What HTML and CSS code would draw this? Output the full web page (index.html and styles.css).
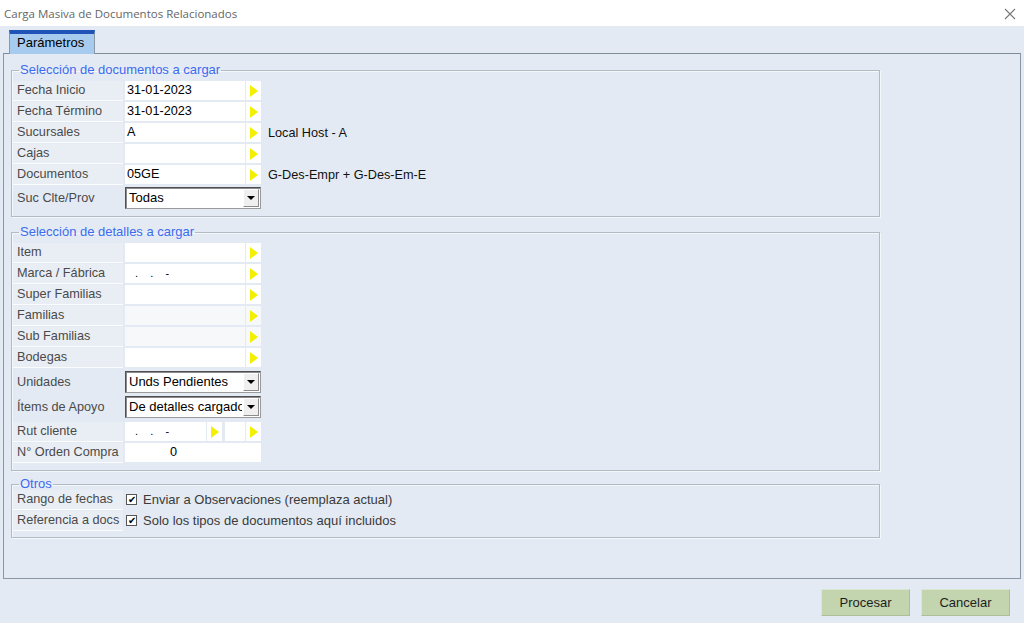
FILE: index.html
```html
<!DOCTYPE html>
<html lang="es">
<head>
    <meta charset="UTF-8">
    <title>Carga Masiva de Documentos Relacionados</title>
    <link rel="stylesheet" href="styles.css">
</head>
<body>
    <div class="window">
        <div class="titlebar">
            <span class="titlebar__text">Carga Masiva de Documentos Relacionados</span>
            <svg class="titlebar__close" width="12" height="12" viewBox="0 0 12 12">
                <path d="M1 1L11 11M11 1L1 11" stroke="#777" stroke-width="1.1" fill="none"/>
            </svg>
        </div>

        <div class="tabs">
            <div class="tab">Parámetros</div>
        </div>

        <div class="panel">
            <fieldset class="group">
                <legend class="group__title">Selección de documentos a cargar</legend>
                <div class="row">
                    <div class="row__label">Fecha Inicio</div>
                    <div class="field"><span class="field__text">31-01-2023</span><span class="field__btn"><svg width="8" height="12" viewBox="0 0 8 12"><polygon points="0,0 8,6 0,12" fill="#f2ef00"/></svg></span></div>
                </div>
                <div class="row">
                    <div class="row__label">Fecha Término</div>
                    <div class="field"><span class="field__text">31-01-2023</span><span class="field__btn"><svg width="8" height="12" viewBox="0 0 8 12"><polygon points="0,0 8,6 0,12" fill="#f2ef00"/></svg></span></div>
                </div>
                <div class="row">
                    <div class="row__label">Sucursales</div>
                    <div class="field"><span class="field__text">A</span><span class="field__btn"><svg width="8" height="12" viewBox="0 0 8 12"><polygon points="0,0 8,6 0,12" fill="#f2ef00"/></svg></span></div>
                    <div class="row__desc">Local Host - A</div>
                </div>
                <div class="row">
                    <div class="row__label">Cajas</div>
                    <div class="field"><span class="field__text"></span><span class="field__btn"><svg width="8" height="12" viewBox="0 0 8 12"><polygon points="0,0 8,6 0,12" fill="#f2ef00"/></svg></span></div>
                </div>
                <div class="row">
                    <div class="row__label">Documentos</div>
                    <div class="field"><span class="field__text">05GE</span><span class="field__btn"><svg width="8" height="12" viewBox="0 0 8 12"><polygon points="0,0 8,6 0,12" fill="#f2ef00"/></svg></span></div>
                    <div class="row__desc">G-Des-Empr + G-Des-Em-E</div>
                </div>
                <div class="row row--select row--suc">
                    <div class="row__label">Suc Clte/Prov</div>
                    <div class="combo"><span class="combo__text">Todas</span><span class="combo__btn"></span></div>
                </div>
            </fieldset>

            <fieldset class="group group--details">
                <legend class="group__title">Selección de detalles a cargar</legend>
                <div class="row">
                    <div class="row__label">Item</div>
                    <div class="field"><span class="field__text"></span><span class="field__btn"><svg width="8" height="12" viewBox="0 0 8 12"><polygon points="0,0 8,6 0,12" fill="#f2ef00"/></svg></span></div>
                </div>
                <div class="row">
                    <div class="row__label">Marca / Fábrica</div>
                    <div class="field"><span class="field__text field__text--mask">.&nbsp;&nbsp;&nbsp;&nbsp;.&nbsp;&nbsp;&nbsp;&nbsp;-</span><span class="field__btn"><svg width="8" height="12" viewBox="0 0 8 12"><polygon points="0,0 8,6 0,12" fill="#f2ef00"/></svg></span></div>
                </div>
                <div class="row">
                    <div class="row__label">Super Familias</div>
                    <div class="field"><span class="field__text"></span><span class="field__btn"><svg width="8" height="12" viewBox="0 0 8 12"><polygon points="0,0 8,6 0,12" fill="#f2ef00"/></svg></span></div>
                </div>
                <div class="row">
                    <div class="row__label">Familias</div>
                    <div class="field field--off"><span class="field__text"></span><span class="field__btn"><svg width="8" height="12" viewBox="0 0 8 12"><polygon points="0,0 8,6 0,12" fill="#f2ef00"/></svg></span></div>
                </div>
                <div class="row">
                    <div class="row__label">Sub Familias</div>
                    <div class="field field--off"><span class="field__text"></span><span class="field__btn"><svg width="8" height="12" viewBox="0 0 8 12"><polygon points="0,0 8,6 0,12" fill="#f2ef00"/></svg></span></div>
                </div>
                <div class="row">
                    <div class="row__label">Bodegas</div>
                    <div class="field"><span class="field__text"></span><span class="field__btn"><svg width="8" height="12" viewBox="0 0 8 12"><polygon points="0,0 8,6 0,12" fill="#f2ef00"/></svg></span></div>
                </div>
                <div class="row row--select row--first-select">
                    <div class="row__label">Unidades</div>
                    <div class="combo"><span class="combo__text">Unds Pendientes</span><span class="combo__btn"></span></div>
                </div>
                <div class="row row--select">
                    <div class="row__label">Ítems de Apoyo</div>
                    <div class="combo"><span class="combo__text">De detalles cargados</span><span class="combo__btn"></span></div>
                </div>
                <div class="row row--rut">
                    <div class="row__label">Rut cliente</div>
                    <div class="field field--rut"><span class="field__text field__text--mask">.&nbsp;&nbsp;&nbsp;&nbsp;.&nbsp;&nbsp;&nbsp;&nbsp;-</span><span class="field__btn"><svg width="8" height="12" viewBox="0 0 8 12"><polygon points="0,0 8,6 0,12" fill="#f2ef00"/></svg></span></div>
                    <div class="field field--dv"><span class="field__text"></span><span class="field__btn"><svg width="8" height="12" viewBox="0 0 8 12"><polygon points="0,0 8,6 0,12" fill="#f2ef00"/></svg></span></div>
                </div>
                <div class="row">
                    <div class="row__label">N° Orden Compra</div>
                    <div class="field"><span class="field__text field__text--num">0</span></div>
                </div>
            </fieldset>

            <fieldset class="group group--otros">
                <legend class="group__title">Otros</legend>
                <div class="row">
                    <div class="row__label">Rango de fechas</div>
                    <label class="check"><span class="check__box">✔</span>Enviar a Observaciones (reemplaza actual)</label>
                </div>
                <div class="row">
                    <div class="row__label">Referencia a docs</div>
                    <label class="check"><span class="check__box">✔</span>Solo los tipos de documentos aquí incluidos</label>
                </div>
            </fieldset>
        </div>

        <div class="actions">
            <button class="btn">Procesar</button>
            <button class="btn">Cancelar</button>
        </div>
    </div>
</body>
</html>
```

FILE: styles.css
```css
body {
    margin: 0;
    padding: 0;
    background-color: #e3eaf3;
    font-family: "Liberation Sans", Arial, sans-serif;
    font-size: 12.7px;
    color: #000000;
}

.window {
    width: 1024px;
    height: 623px;
    overflow: hidden;
    background-color: #e3eaf3;
}

.titlebar {
    height: 26px;
    background-color: #ffffff;
    display: flex;
    align-items: center;
    justify-content: space-between;
    padding: 0 8px 0 4px;
}

.titlebar__text {
    color: #666666;
    font-family: "Open Sans", "Liberation Sans", sans-serif;
    font-size: 11.5px;
}

.titlebar__close {
    margin-top: 1px;
}

.tabs {
    display: flex;
    padding-left: 9px;
    margin-top: 4px;
    height: 23px;
}

.tab {
    width: 86px;
    box-sizing: border-box;
    height: 24px;
    border-top: 4px solid #1f53b8;
    border-left: 1px solid #8a97a6;
    border-right: 1px solid #8a97a6;
    background-color: #a6cbee;
    padding-left: 7px;
    font-size: 13px;
    line-height: 18px;
    position: relative;
    z-index: 1;
}

.panel {
    margin: 0 3px 0 3px;
    height: 526px;
    box-sizing: border-box;
    border: 1px solid #8a97a6;
    border-top-color: #7e8b99;
    padding: 9px 0 0 7px;
}

.group {
    width: 869px;
    box-sizing: border-box;
    margin: 0;
    border: 1px solid #b2bac4;
    box-shadow: inset 1px 1px 0 #f5f8fb, 1px 1px 0 #f5f8fb;
    padding: 4px 0 6px 1px;
}

.group--details {
    margin-top: 8px;
    padding-bottom: 6px;
}

.group--otros {
    margin-top: 7px;
    padding-top: 0;
    padding-bottom: 5px;
}

.group__title {
    color: #3d6af0;
    font-size: 13px;
    line-height: 14px;
    padding: 0 1px;
    margin-left: 6px;
}

.group--otros .group__title {
    line-height: 12px;
}

.row {
    display: flex;
    align-items: center;
    height: 19px;
    margin-bottom: 2px;
}

.row--select {
    height: 22px;
    margin-bottom: 3px;
}

.row--suc {
    margin-top: 3px;
    margin-bottom: 1px;
}

.row--first-select {
    margin-top: 4px;
}

.row--rut {
    margin-top: 4px;
}

.row__label {
    width: 106px;
    height: 19px;
    padding-left: 4px;
    margin-right: 2px;
    box-sizing: content-box;
    background-color: #e9eef5;
    border-bottom: 1px solid #fbfcfe;
    color: #4a4a4a;
    line-height: 18px;
    white-space: nowrap;
}

.row--select .row__label {
    height: 22px;
    line-height: 22px;
    border-bottom: none;
    background-color: transparent;
}

.row__desc {
    margin-left: 7px;
    color: #111;
}

.field {
    display: flex;
    width: 136px;
    height: 19px;
}

.field__text {
    flex: 1;
    background-color: #ffffff;
    padding-left: 2px;
    line-height: 19px;
    margin-right: 1px;
    white-space: pre;
}

.field__text--mask {
    padding-left: 10px;
    font-size: 11px;
}

.field__text--num {
    padding-left: 45px;
    margin-right: 0;
}

.field__btn {
    width: 15px;
    background-color: #ffffff;
    display: flex;
    align-items: center;
    justify-content: center;
}

.field--off .field__text,
.field--off .field__btn {
    background-color: #f7f8f9;
}

.field--rut {
    width: 97px;
}

.field--dv {
    width: 36px;
    margin-left: 3px;
}

.combo {
    width: 136px;
    height: 22px;
    box-sizing: border-box;
    display: flex;
    background-color: #ffffff;
    border: 1px solid #9a9a9a;
    border-top-color: #505050;
    border-left-color: #505050;
    box-shadow: inset 1px 1px 0 #8a8a8a;
    overflow: hidden;
}

.combo__text {
    flex: 1;
    padding-left: 3px;
    font-size: 13px;
    line-height: 20px;
    white-space: nowrap;
    overflow: hidden;
}

.combo__btn {
    width: 16px;
    flex-shrink: 0;
    margin: 1px;
    box-sizing: border-box;
    background-color: #efefef;
    border: 1px solid #ffffff;
    border-right-color: #8c8c8c;
    border-bottom-color: #8c8c8c;
    display: flex;
    align-items: center;
    justify-content: center;
}

.combo__btn::after {
    content: "";
    border-left: 4px solid transparent;
    border-right: 4px solid transparent;
    border-top: 4px solid #000;
}

.check {
    display: flex;
    align-items: center;
    color: #3a3a3a;
    font-size: 13px;
    white-space: nowrap;
}

.check__box {
    width: 11px;
    height: 11px;
    box-sizing: border-box;
    border: 1px solid #555;
    background-color: #ffffff;
    margin-right: 6px;
    margin-left: 1px;
    font-size: 10px;
    line-height: 9px;
    text-align: center;
    color: #000;
}

.actions {
    display: flex;
    justify-content: flex-end;
    gap: 11px;
    padding: 10px 14px 0 0;
}

.btn {
    width: 89px;
    height: 27px;
    background-color: #c3d5ae;
    border: 1px solid #aebd9c;
    border-top-color: #dbe6cf;
    border-left-color: #dbe6cf;
    font-family: "Liberation Sans", Arial, sans-serif;
    font-size: 13px;
    color: #1e1e1e;
    padding: 0;
}
```
